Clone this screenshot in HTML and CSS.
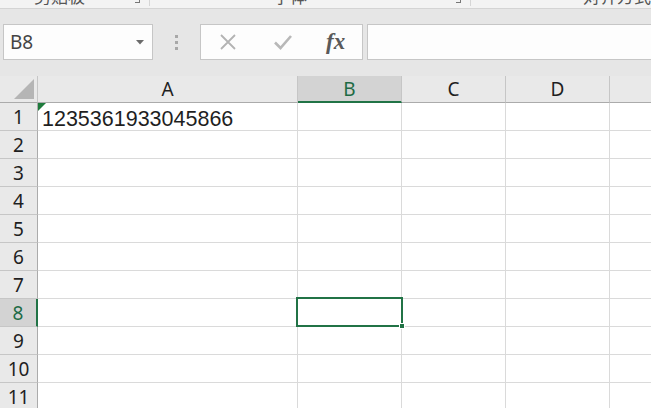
FILE: index.html
```html
<!DOCTYPE html>
<html lang="zh-CN">
<head>
    <meta charset="UTF-8">
    <title>Excel - Sheet1</title>
    <link rel="stylesheet" href="styles.css">
</head>
<body>
    <div class="ribbon-tail">
        <div class="group group-clip"><span class="group-label">剪贴板</span><span class="launcher"></span></div>
        <div class="group group-font"><span class="group-label">字体</span><span class="launcher"></span></div>
        <div class="group group-align"><span class="group-label">对齐方式</span></div>
    </div>

    <div class="formula-bar">
        <div class="name-box">
            <span class="name-text">B8</span>
            <svg class="caret" width="8" height="5" viewBox="0 0 8 5"><polygon points="0,0 8,0 4,4.5" fill="#6b6b6b"/></svg>
        </div>
        <div class="grip"><i></i><i></i><i></i></div>
        <div class="fx-buttons">
            <svg class="fx-icon" width="18" height="16" viewBox="0 0 18 16">
                <path d="M2 1 L16 15 M16 1 L2 15" stroke="#b3b3b3" stroke-width="1.8" fill="none"/>
            </svg>
            <svg class="fx-icon" width="20" height="16" viewBox="0 0 20 16">
                <path d="M2 8.5 L7.5 14 L18 2" stroke="#b8b8b8" stroke-width="2.6" fill="none"/>
            </svg>
            <span class="fx-label">fx</span>
        </div>
        <div class="formula-input"></div>
    </div>

    <div class="sheet">
        <div class="row head-row">
            <div class="corner">
                <svg width="22" height="22" viewBox="0 0 22 22"><polygon points="21,1 21,21 1,21" fill="#b5b5b5"/></svg>
            </div>
            <div class="col-head">A</div>
            <div class="col-head active">B</div>
            <div class="col-head">C</div>
            <div class="col-head">D</div>
            <div class="col-head last"></div>
        </div>
        <div class="row">
            <div class="row-head">1</div>
            <div class="cell text-cell"><span class="flag"></span>1235361933045866</div>
            <div class="cell"></div><div class="cell"></div><div class="cell"></div><div class="cell"></div>
        </div>
        <div class="row"><div class="row-head">2</div><div class="cell"></div><div class="cell"></div><div class="cell"></div><div class="cell"></div><div class="cell"></div></div>
        <div class="row"><div class="row-head">3</div><div class="cell"></div><div class="cell"></div><div class="cell"></div><div class="cell"></div><div class="cell"></div></div>
        <div class="row"><div class="row-head">4</div><div class="cell"></div><div class="cell"></div><div class="cell"></div><div class="cell"></div><div class="cell"></div></div>
        <div class="row"><div class="row-head">5</div><div class="cell"></div><div class="cell"></div><div class="cell"></div><div class="cell"></div><div class="cell"></div></div>
        <div class="row"><div class="row-head">6</div><div class="cell"></div><div class="cell"></div><div class="cell"></div><div class="cell"></div><div class="cell"></div></div>
        <div class="row"><div class="row-head">7</div><div class="cell"></div><div class="cell"></div><div class="cell"></div><div class="cell"></div><div class="cell"></div></div>
        <div class="row">
            <div class="row-head active">8</div>
            <div class="cell"></div>
            <div class="cell selected"><span class="fill-handle"></span></div>
            <div class="cell"></div><div class="cell"></div><div class="cell"></div>
        </div>
        <div class="row"><div class="row-head">9</div><div class="cell"></div><div class="cell"></div><div class="cell"></div><div class="cell"></div><div class="cell"></div></div>
        <div class="row"><div class="row-head">10</div><div class="cell"></div><div class="cell"></div><div class="cell"></div><div class="cell"></div><div class="cell"></div></div>
        <div class="row"><div class="row-head">11</div><div class="cell"></div><div class="cell"></div><div class="cell"></div><div class="cell"></div><div class="cell"></div></div>
    </div>
</body>
</html>
```

FILE: styles.css
```css
:root {
    --excel-green: #217346;
    --bar-bg: #e6e6e6;
    --head-bg: #e9e9e9;
    --head-line: #c6c6c6;
    --grid-line: #dadada;
    --box-line: #c6c6c6;
}

* {
    box-sizing: border-box;
}

html, body {
    margin: 0;
    padding: 0;
    overflow: hidden;
}

body {
    width: 651px;
    height: 408px;
    background: white;
    font-family: 'Noto Sans', 'Noto Sans CJK SC', sans-serif;
    color: #262626;
}

/* bottom edge of the ribbon, labels cut off */
.ribbon-tail {
    height: 9px;
    display: flex;
    background: #f3f3f3;
    border-bottom: 1px solid #d4d4d4;
    overflow: hidden;
}

.group {
    position: relative;
    display: flex;
    justify-content: center;
    border-right: 1px solid #d6d6d6;
    height: 6px;
}

.group-clip {
    width: 153px;
    padding-right: 30px;
}

.group-font {
    width: 328px;
    padding-right: 40px;
}

.group-align {
    flex: 1;
    border-right: none;
    justify-content: flex-start;
    padding-left: 112px;
}

.group-label {
    font-family: 'Noto Sans CJK SC', sans-serif;
    font-size: 17px;
    line-height: 17px;
    color: #555;
    margin-top: -13px;
    white-space: nowrap;
}

.launcher {
    position: absolute;
    right: 9px;
    top: 0;
    width: 5px;
    height: 3px;
    border-right: 1px solid #777;
    border-bottom: 1px solid #777;
}

/* name box + formula bar */
.formula-bar {
    height: 67px;
    background: var(--bar-bg);
    display: flex;
    align-items: flex-start;
    padding-top: 15px;
    padding-left: 3px;
}

.name-box {
    width: 150px;
    height: 36px;
    background: #fdfdfd;
    border: 1px solid var(--box-line);
    display: flex;
    align-items: center;
    justify-content: space-between;
    padding: 0 8px 0 6px;
}

.name-text {
    font-size: 19px;
    color: #444;
}

.grip {
    width: 47px;
    height: 36px;
    display: flex;
    flex-direction: column;
    align-items: center;
    justify-content: center;
    gap: 3px;
}

.grip i {
    display: block;
    width: 3px;
    height: 3px;
    background: #a8a8a8;
}

.fx-buttons {
    width: 163px;
    height: 36px;
    background: #fdfdfd;
    border: 1px solid var(--box-line);
    display: flex;
    align-items: center;
    padding-left: 18px;
    gap: 36px;
}

.fx-label {
    font-family: 'Liberation Serif', 'DejaVu Serif', serif;
    font-style: italic;
    font-weight: bold;
    font-size: 23px;
    color: #5a5a5a;
    margin-left: -3px;
}

.formula-input {
    flex: 1;
    height: 36px;
    margin-left: 4px;
    background: #fdfdfd;
    border: 1px solid var(--box-line);
    border-right: none;
}

/* worksheet grid */
.row {
    display: grid;
    grid-template-columns: 38px 260px 104px 104px 104px 1fr;
    grid-template-rows: 28px;
    height: 28px;
}

.head-row {
    grid-template-rows: 27px;
    height: 27px;
}

.corner,
.col-head,
.row-head {
    background: var(--head-bg);
    display: flex;
    align-items: center;
    justify-content: center;
    font-size: 19px;
    color: #1f1f1f;
}

.corner {
    border-right: 1px solid var(--head-line);
    border-bottom: 1px solid #ababab;
    align-items: flex-end;
    justify-content: flex-end;
    padding: 0 2px 2px 0;
}

.col-head {
    border-right: 1px solid var(--head-line);
    border-bottom: 1px solid #ababab;
}

.col-head.last {
    border-right: none;
}

.col-head.active {
    background: #d3d3d3;
    color: #1e6b45;
    border-bottom: 2px solid var(--excel-green);
}

.row-head {
    border-right: 1px solid #ababab;
    border-bottom: 1px solid var(--head-line);
}

.row-head.active {
    background: #d3d3d3;
    color: #1e6b45;
    border-right: 2px solid var(--excel-green);
}

.cell {
    position: relative;
    border-right: 1px solid var(--grid-line);
    border-bottom: 1px solid var(--grid-line);
}

.cell:last-child {
    border-right: none;
}

.text-cell {
    font-family: 'Liberation Sans', Arial, sans-serif;
    font-size: 21.5px;
    line-height: 28px;
    padding: 2px 0 0 4px;
    color: #1f1f1f;
    white-space: nowrap;
    overflow: hidden;
}

.flag {
    position: absolute;
    left: 0;
    top: 0;
    width: 0;
    height: 0;
    border-top: 8px solid #1e7b3c;
    border-right: 8px solid transparent;
}

.cell.selected::after {
    content: "";
    position: absolute;
    left: -2px;
    top: -2px;
    right: -2px;
    bottom: -1px;
    border: 2px solid var(--excel-green);
}

.fill-handle {
    position: absolute;
    right: -4px;
    bottom: -3px;
    width: 6px;
    height: 6px;
    background: var(--excel-green);
    border: 1px solid white;
    z-index: 2;
}
```
